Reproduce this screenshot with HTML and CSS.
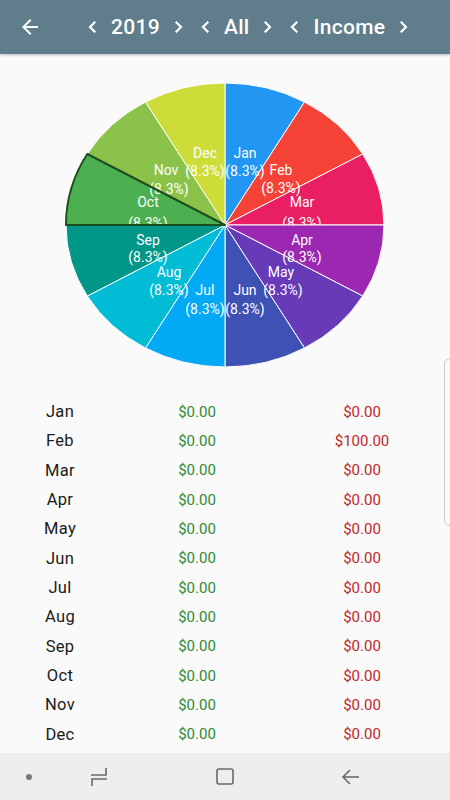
FILE: index.html
```html
<!DOCTYPE html>
<html>
<head>
<meta charset="utf-8">
<link rel="stylesheet" href="styles.css">
</head>
<body>
<div class="screen">
  <header class="appbar">
    <svg class="back" viewBox="0 0 24 24" width="24" height="24"><path d="M20 11H7.83l5.59-5.59L12 4l-8 8 8 8 1.41-1.41L7.83 13H20v-2z" fill="#fff"/></svg>
    <div class="selectors">
      <div class="sel">
        <svg class="chev" viewBox="0 0 8 12" width="8" height="12"><polyline points="6.5,1.5 2,6 6.5,10.5" /></svg>
        <span class="sel-text">2019</span>
        <svg class="chev" viewBox="0 0 8 12" width="8" height="12"><polyline points="1.5,1.5 6,6 1.5,10.5" /></svg>
      </div>
      <div class="sel">
        <svg class="chev" viewBox="0 0 8 12" width="8" height="12"><polyline points="6.5,1.5 2,6 6.5,10.5" /></svg>
        <span class="sel-text">All</span>
        <svg class="chev" viewBox="0 0 8 12" width="8" height="12"><polyline points="1.5,1.5 6,6 1.5,10.5" /></svg>
      </div>
      <div class="sel">
        <svg class="chev" viewBox="0 0 8 12" width="8" height="12"><polyline points="6.5,1.5 2,6 6.5,10.5" /></svg>
        <span class="sel-text">Income</span>
        <svg class="chev" viewBox="0 0 8 12" width="8" height="12"><polyline points="1.5,1.5 6,6 1.5,10.5" /></svg>
      </div>
    </div>
  </header>

  <main class="content">
    <svg class="pie" viewBox="0 54 450 342" width="450" height="342">
      <defs>
        <clipPath id="upper"><rect x="0" y="0" width="450" height="225"/></clipPath>
      </defs>
      <g class="slices">
        <path fill="#2196F3" d="M225 225 L225 83 A159 142 0 0 1 304.5 102.03 Z"/>
        <path fill="#F44336" d="M225 225 L304.5 102.03 A159 142 0 0 1 362.7 154 Z"/>
        <path fill="#E91E63" d="M225 225 L362.7 154 A159 142 0 0 1 384 225 Z"/>
        <path fill="#9C27B0" d="M225 225 L384 225 A159 142 0 0 1 362.7 296 Z"/>
        <path fill="#673AB7" d="M225 225 L362.7 296 A159 142 0 0 1 304.5 347.97 Z"/>
        <path fill="#3F51B5" d="M225 225 L304.5 347.97 A159 142 0 0 1 225 367 Z"/>
        <path fill="#03A9F4" d="M225 225 L225 367 A159 142 0 0 1 145.5 347.97 Z"/>
        <path fill="#00BCD4" d="M225 225 L145.5 347.97 A159 142 0 0 1 87.3 296 Z"/>
        <path fill="#009688" d="M225 225 L87.3 296 A159 142 0 0 1 66 225 Z"/>
        <path fill="#4CAF50" d="M225 225 L66 225 A159 142 0 0 1 87.3 154 Z"/>
        <path fill="#8BC34A" d="M225 225 L87.3 154 A159 142 0 0 1 145.5 102.03 Z"/>
        <path fill="#CDDC39" d="M225 225 L145.5 102.03 A159 142 0 0 1 225 83 Z"/>
      </g>
      <g class="labels">
        <text x="245" y="158">Jan</text><text x="245" y="176">(8.3%)</text>
        <text x="281" y="175">Feb</text><text x="281" y="193">(8.3%)</text>
        <text x="302" y="207">Mar</text><text x="302" y="228" clip-path="url(#upper)">(8.3%)</text>
        <text x="302" y="245">Apr</text><text x="302" y="262">(8.3%)</text>
        <text x="281" y="277">May</text><text x="283" y="295">(8.3%)</text>
        <text x="245" y="295">Jun</text><text x="245" y="314">(8.3%)</text>
        <text x="205" y="295">Jul</text><text x="205" y="314">(8.3%)</text>
        <text x="169" y="277">Aug</text><text x="169" y="295">(8.3%)</text>
        <text x="148" y="245">Sep</text><text x="148" y="262">(8.3%)</text>
        <text x="148" y="207">Oct</text><text x="148" y="228" clip-path="url(#upper)">(8.3%)</text>
        <text x="166" y="175">Nov</text><text x="169" y="194">(8.3%)</text>
        <text x="205" y="158">Dec</text><text x="205" y="176">(8.3%)</text>
      </g>
      <path class="selected" d="M225 225 L66 225 A159 142 0 0 1 87.3 154 Z"/>
    </svg>

    <div class="table">
      <div class="row"><span class="m">Jan</span><span class="inc">$0.00</span><span class="exp">$0.00</span></div>
      <div class="row"><span class="m">Feb</span><span class="inc">$0.00</span><span class="exp">$100.00</span></div>
      <div class="row"><span class="m">Mar</span><span class="inc">$0.00</span><span class="exp">$0.00</span></div>
      <div class="row"><span class="m">Apr</span><span class="inc">$0.00</span><span class="exp">$0.00</span></div>
      <div class="row"><span class="m">May</span><span class="inc">$0.00</span><span class="exp">$0.00</span></div>
      <div class="row"><span class="m">Jun</span><span class="inc">$0.00</span><span class="exp">$0.00</span></div>
      <div class="row"><span class="m">Jul</span><span class="inc">$0.00</span><span class="exp">$0.00</span></div>
      <div class="row"><span class="m">Aug</span><span class="inc">$0.00</span><span class="exp">$0.00</span></div>
      <div class="row"><span class="m">Sep</span><span class="inc">$0.00</span><span class="exp">$0.00</span></div>
      <div class="row"><span class="m">Oct</span><span class="inc">$0.00</span><span class="exp">$0.00</span></div>
      <div class="row"><span class="m">Nov</span><span class="inc">$0.00</span><span class="exp">$0.00</span></div>
      <div class="row"><span class="m">Dec</span><span class="inc">$0.00</span><span class="exp">$0.00</span></div>
    </div>
    <div class="edge-handle"></div>
  </main>

  <nav class="navbar">
    <div class="nav-item"><span class="dot"></span></div>
    <div class="nav-item">
      <svg viewBox="0 0 20 20" width="20" height="20" class="nav-icon"><polyline points="2,8 17,8 17,1"/><polyline points="3,19 3,12 18,12"/></svg>
    </div>
    <div class="nav-item">
      <svg viewBox="0 0 20 20" width="20" height="20" class="nav-icon"><rect x="2" y="2" width="16" height="15" rx="2"/></svg>
    </div>
    <div class="nav-item">
      <svg viewBox="0 0 20 20" width="20" height="20" class="nav-icon"><line x1="2" y1="10" x2="18" y2="10"/><polyline points="9,3 2,10 9,17"/></svg>
    </div>
  </nav>
</div>
</body>
</html>
```

FILE: styles.css
```css
* { box-sizing: border-box; }
html, body {
  margin: 0;
  padding: 0;
  width: 450px;
  height: 800px;
  overflow: hidden;
  background: #FAFAFA;
  font-family: Roboto, "Noto Sans", "Liberation Sans", sans-serif;
}
.screen {
  display: flex;
  flex-direction: column;
  height: 800px;
}
.appbar {
  height: 54px;
  flex: 0 0 54px;
  background: #607D8B;
  display: flex;
  align-items: center;
  padding-left: 18px;
  box-shadow: 0 1px 3px rgba(0,0,0,0.25);
  position: relative;
  z-index: 2;
}
.back { display: block; }
.selectors {
  display: flex;
  align-items: center;
  gap: 18px;
  margin-left: 46px;
}
.sel {
  display: flex;
  align-items: center;
  gap: 15px;
}
.chev {
  display: block;
  fill: none;
  stroke: #fff;
  stroke-width: 2.2;
  stroke-linecap: square;
}
.sel-text {
  color: #fff;
  font-size: 21px;
  font-weight: 500;
  line-height: 24px;
  letter-spacing: 0.3px;
}
.content {
  flex: 1;
  position: relative;
  overflow: hidden;
}
.pie { display: block; }
.slices path {
  stroke: #fff;
  stroke-width: 1;
  stroke-linejoin: round;
}
.labels text {
  fill: #fff;
  font-size: 14px;
  font-family: Roboto, "Noto Sans", sans-serif;
  text-anchor: middle;
}
.selected {
  fill: none;
  stroke: #1B4D1E;
  stroke-width: 2;
  stroke-linejoin: round;
}
.table {
  display: flex;
  flex-direction: column;
  margin-top: 1px;
}
.row {
  display: grid;
  grid-template-columns: 120px 154px 176px;
  height: 29.33px;
  align-items: center;
  justify-items: center;
}
.m {
  color: #1a1a1a;
  font-size: 16.5px;
  letter-spacing: 0.3px;
}
.inc {
  color: #2E8B34;
  font-size: 15px;
}
.exp {
  color: #C0272D;
  font-size: 15px;
}
.edge-handle {
  position: absolute;
  right: -8px;
  top: 304px;
  width: 14px;
  height: 168px;
  border: 1px solid #c8c8c8;
  border-radius: 6px;
}
.navbar {
  height: 47px;
  flex: 0 0 47px;
  background: #EEEEEE;
  display: grid;
  grid-template-columns: 58px 82px 170px 82px;
  align-items: center;
  justify-items: center;
}
.nav-item {
  display: flex;
  align-items: center;
  justify-content: center;
}
.dot {
  width: 6px;
  height: 6px;
  border-radius: 50%;
  background: #777;
}
.nav-icon {
  display: block;
  fill: none;
  stroke: #6a6a6a;
  stroke-width: 1.6;
}
```
